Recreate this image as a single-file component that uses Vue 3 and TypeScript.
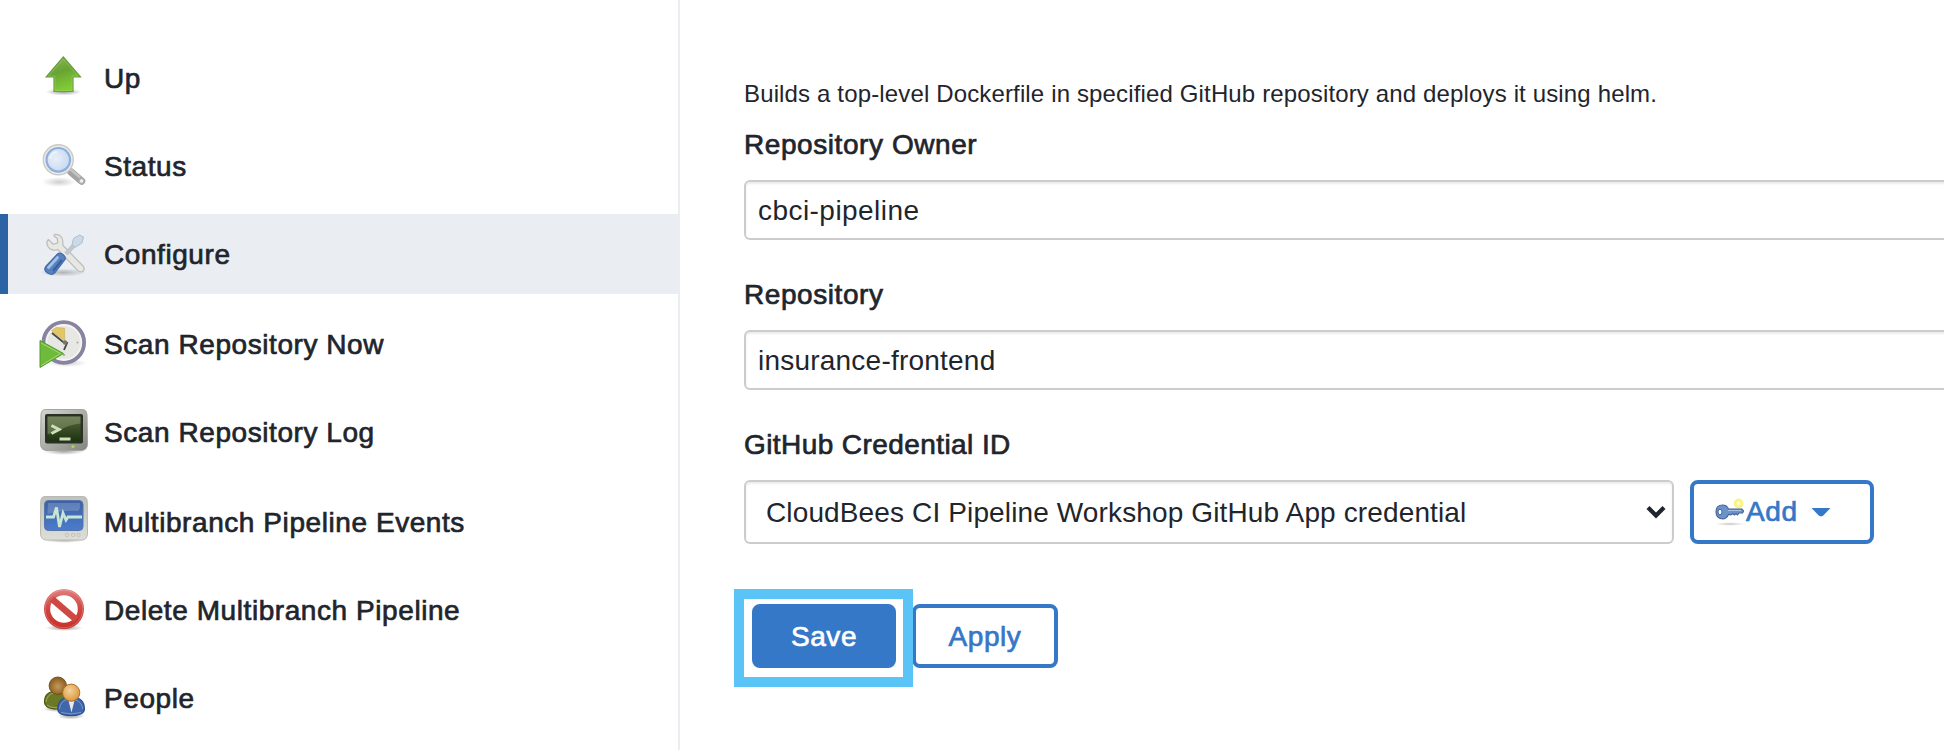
<script setup lang="ts">
import { ref } from 'vue'

type IconName = 'up' | 'search' | 'tools' | 'scan' | 'terminal' | 'monitor' | 'delete' | 'people'

interface Task {
  label: string
  icon: IconName
  selected?: boolean
}

const tasks: Task[] = [
  { label: 'Up', icon: 'up' },
  { label: 'Status', icon: 'search' },
  { label: 'Configure', icon: 'tools', selected: true },
  { label: 'Scan Repository Now', icon: 'scan' },
  { label: 'Scan Repository Log', icon: 'terminal' },
  { label: 'Multibranch Pipeline Events', icon: 'monitor' },
  { label: 'Delete Multibranch Pipeline', icon: 'delete' },
  { label: 'People', icon: 'people' },
]

const owner = ref<string>('cbci-pipeline')
const repository = ref<string>('insurance-frontend')
const credentials: string[] = ['CloudBees CI Pipeline Workshop GitHub App credential']
const credential = ref<string>(credentials[0])
</script>

<template>
  <div class="page">
    <svg class="defs" width="0" height="0" aria-hidden="true">
      <defs>
        <radialGradient id="shadow">
          <stop offset="0" stop-color="#000" stop-opacity=".38" />
          <stop offset="1" stop-color="#000" stop-opacity="0" />
        </radialGradient>
        <linearGradient id="green" x1="0" y1="0" x2=".35" y2="1">
          <stop offset="0" stop-color="#8db965" />
          <stop offset=".5" stop-color="#69a332" />
          <stop offset="1" stop-color="#80cc37" />
        </linearGradient>
        <radialGradient id="lens" cx=".4" cy=".45" r=".7">
          <stop offset="0" stop-color="#e9f0f9" />
          <stop offset="1" stop-color="#c1d5ee" />
        </radialGradient>
        <linearGradient id="bezel" x1="0" y1="0" x2="1" y2="1">
          <stop offset="0" stop-color="#d6d7d2" />
          <stop offset="1" stop-color="#82847d" />
        </linearGradient>
        <linearGradient id="bezelLight" x1="0" y1="0" x2="0" y2="1">
          <stop offset="0" stop-color="#bfc1bb" />
          <stop offset="1" stop-color="#deded9" />
        </linearGradient>
        <linearGradient id="screen" x1="0" y1="0" x2="0" y2="1">
          <stop offset="0" stop-color="#57683b" />
          <stop offset="1" stop-color="#1c3210" />
        </linearGradient>
        <linearGradient id="blue" x1="0" y1="0" x2="0" y2="1">
          <stop offset="0" stop-color="#3d62a3" />
          <stop offset="1" stop-color="#4b7bcc" />
        </linearGradient>
        <linearGradient id="red" x1="0" y1="0" x2="0" y2="1">
          <stop offset="0" stop-color="#e07f7d" />
          <stop offset=".5" stop-color="#cf4541" />
          <stop offset="1" stop-color="#c8312b" />
        </linearGradient>
        <radialGradient id="brown" cx=".5" cy=".55" r=".6">
          <stop offset="0" stop-color="#c59a58" />
          <stop offset="1" stop-color="#805619" />
        </radialGradient>
        <radialGradient id="orange" cx=".42" cy=".38" r=".65">
          <stop offset="0" stop-color="#f2d3a0" />
          <stop offset="1" stop-color="#dc9638" />
        </radialGradient>
      </defs>
    </svg>

    <aside class="sidebar">
      <a
        v-for="task in tasks"
        :key="task.label"
        class="task"
        :class="[`task-${task.icon}`, { selected: task.selected }]"
      >
        <svg class="icon" viewBox="0 0 48 48" aria-hidden="true">
          <template v-if="task.icon === 'up'">
            <ellipse cx="23.5" cy="38" rx="18" ry="3.5" fill="url(#shadow)" />
            <path d="M23.3 3 40.5 23H33v14.500H14V23H6.200Z" fill="url(#green)" stroke="#699d3d" stroke-width="1.2" />
            <path d="M23.300 5 38 22H32v14.500H15V22H8.500Z" fill="none" stroke="#a5da70" stroke-opacity=".4" />
          </template>

          <template v-else-if="task.icon === 'search'">
            <ellipse cx="19" cy="40" rx="17" ry="5" fill="url(#shadow)" opacity=".5" />
            <path d="m31 30 10.500 9" stroke="#a3a3a2" stroke-width="7.500" stroke-linecap="round" />
            <path d="m30 27 10 8.500" stroke="#c4c4c3" stroke-width="2.400" />
            <circle cx="41.500" cy="39" r="2.200" fill="#efefee" stroke="#b8b8b6" />
            <circle cx="18.300" cy="17.800" r="15" fill="#ebebea" stroke="#c9c9c8" stroke-width="1.400" />
            <circle cx="18.300" cy="17.800" r="11.800" fill="url(#lens)" stroke="#8dafdc" stroke-width="2.200" />
            <path d="M10 17a8 8 0 0 1 7-7" fill="none" stroke="#fff" stroke-width="2.500" opacity=".5" />
          </template>

          <template v-else-if="task.icon === 'tools'">
            <ellipse cx="23" cy="42.500" rx="23" ry="4" fill="url(#shadow)" opacity=".65" />
            <path d="M14.500 4.500c5-.8 9 3 8.200 8.200l.3 2.800 20 20.500c2 2.200 1 5-.7 5.600-1.800.7-3.500.2-5-1.500L17.800 19.500c-5.500 2-11-1-11-7.500l1.500-2.500 5 4.800 4.500-1.500-.5-4.300-3.300-2.500Z" fill="#e7e7e4" stroke="#bdbebb" stroke-width="1.300" />
            <path d="m26 24 10-11" stroke="#bfc7d0" stroke-width="4.500" />
            <path d="m32 14.500 1.500-6 6-3.500 4 2-1.500 5.800-6.500 4.500Z" fill="#cbd9e8" stroke="#aebccb" />
            <path d="M18 23.500c3-1.500 8.500 2.500 7 6L15 42.500c-2 2.300-5 2-7.500.5-3-2-3.500-4-1.700-6.500Z" fill="#5680bf" stroke="#4269a8" stroke-width="1.200" />
            <path d="m17.500 27.500-9 10" stroke="#a5c0e6" stroke-width="2.800" stroke-linecap="round" />
            <path d="m22 30-9 11" stroke="#355f9f" stroke-width="2" />
          </template>

          <template v-else-if="task.icon === 'scan'">
            <ellipse cx="27" cy="43" rx="20" ry="4" fill="url(#shadow)" opacity=".5" />
            <circle cx="23.800" cy="22.500" r="20" fill="#e7e7e3" stroke="#88849f" stroke-width="4.500" />
            <circle cx="23.800" cy="22.500" r="17.500" fill="none" stroke="#f5f5f4" stroke-width="1.800" />
            <path d="M11.500 10.500 16 7.500l8.500.8.200 12.500Z" fill="#e4c765" stroke="#c7a951" stroke-width=".6" />
            <path d="m12 13 11 9 4 1-3 7" fill="none" stroke="#494a43" stroke-width="1.900" />
            <circle cx="25" cy="22.500" r="2.200" fill="#77776e" />
            <circle cx="37.500" cy="22.500" r="1" fill="#aaa" />
            <circle cx="24" cy="35" r="1" fill="#999" />
            <path d="M0 20.500 23.500 33.500 0 47.500Z" fill="#6fb93b" stroke="#559b2b" stroke-width="1" />
            <path d="M1.200 23 20.500 33.500 1.200 45.500" fill="none" stroke="#a1dc73" stroke-width="1" />
          </template>

          <template v-else-if="task.icon === 'terminal'">
            <ellipse cx="24" cy="43" rx="21" ry="4" fill="url(#shadow)" />
            <path d="M5.500 1.500h37q4 0 4.500 5l.5 29q0 7-6.500 7H7q-6.500 0-6.500-7l.5-29q.5-5 4.500-5Z" fill="url(#bezel)" stroke="#a3a59d" />
            <rect x="5" y="6" width="38" height="29.500" rx="2" fill="#2b3026" />
            <rect x="7.500" y="8.500" width="33" height="25" fill="url(#screen)" />
            <path d="M7.500 8.500h33v7Q28 17 21 21.500T7.500 26Z" fill="#9fae86" opacity=".4" />
            <path d="m11.500 17.500 7.500 4-7.500 4M19.500 31h11" fill="none" stroke="#cddfbd" stroke-width="3" />
            <circle cx="33" cy="38.500" r="1.500" fill="#9edb48" />
          </template>

          <template v-else-if="task.icon === 'monitor'">
            <ellipse cx="24" cy="43.500" rx="21" ry="3.500" fill="url(#shadow)" />
            <path d="M5 .5h38q4 0 4.300 5l.2 31.500q0 7-6 7h-35q-6 0-6-7l.2-31.500Q1 .5 5 .5Z" fill="url(#bezelLight)" stroke="#b9bab4" />
            <rect x="4.500" y="4.500" width="38.500" height="30" rx="4" fill="url(#blue)" stroke="#5775aa" />
            <path d="M8 7h32q1 5-2 8Q25 14 7.500 18Z" fill="#fff" opacity=".18" />
            <path d="M6 21h7.500l3-9.500L19.500 31l3.500-14 3 7 2-3h14" fill="none" stroke="#c8e5d4" stroke-width="2.800" />
            <g fill="none" stroke="#c3c4be" stroke-width="1">
              <circle cx="27" cy="39" r="1.700" /><circle cx="33" cy="39" r="1.700" /><circle cx="38.500" cy="39" r="1.700" />
            </g>
          </template>

          <template v-else-if="task.icon === 'delete'">
            <ellipse cx="24" cy="42" rx="19" ry="3" fill="url(#shadow)" />
            <circle cx="24" cy="23" r="16.700" fill="#fff" />
            <path fill-rule="evenodd" d="M24 3a20 20 0 1 1 0 40 20 20 0 0 1 0-40Zm0 6.200a13.800 13.800 0 1 0 0 27.600 13.800 13.800 0 0 0 0-27.600Z" fill="url(#red)" />
            <path d="m12 13 24 20.500" stroke="#ce4844" stroke-width="6.500" />
            <circle cx="24" cy="23" r="18.800" fill="none" stroke="#fff" stroke-opacity=".22" />
          </template>

          <template v-else>
            <ellipse cx="16" cy="35" rx="13" ry="3" fill="url(#shadow)" />
            <ellipse cx="31" cy="42" rx="14" ry="3.500" fill="url(#shadow)" />
            <path d="M4.500 28q0-11 12.500-11t13 11q-1 7-13 7T4.500 28Z" fill="#6b7824" stroke="#4a5912" stroke-width="1.200" />
            <path d="M6 28q1-8 9-9.500M7 31q3 3 10 2.800" fill="none" stroke="#a4ad5d" stroke-width="1" />
            <circle cx="17.800" cy="11.700" r="8.700" fill="url(#brown)" stroke="#6d4a17" stroke-width=".9" />
            <path d="M17.800 35q0-12 13.300-12t13.300 12q0 6.500-13.300 6.500T17.800 35Z" fill="#4066ab" stroke="#2e508e" stroke-width="1.200" />
            <path d="M19.500 35q1-8 7.500-9.500M42.700 35q-1-7-7-9M21 38.500q10 3 20 0" fill="none" stroke="#819ed0" stroke-width=".9" />
            <path d="M28.500 26.500h6l-3 12Z" fill="#e9ebee" />
            <circle cx="31.200" cy="18.700" r="8.600" fill="url(#orange)" stroke="#a76920" stroke-width=".9" />
          </template>
        </svg>
        <span class="task-label">{{ task.label }}</span>
      </a>
    </aside>

    <main class="main">
      <p class="description">
        Builds a top-level Dockerfile in specified GitHub repository and deploys it using helm.
      </p>

      <div class="field">
        <label class="label" for="owner">Repository Owner</label>
        <input id="owner" v-model="owner" class="control owner" type="text" spellcheck="false" />
      </div>

      <div class="field">
        <label class="label" for="repository">Repository</label>
        <input id="repository" v-model="repository" class="control" type="text" spellcheck="false" />
      </div>

      <div class="field">
        <label class="label credential-label" for="credential">GitHub Credential ID</label>
        <div class="credential-row">
          <div class="select-wrap">
            <select id="credential" v-model="credential" class="control select">
              <option v-for="item in credentials" :key="item" :value="item">{{ item }}</option>
            </select>
            <svg class="chevron" viewBox="0 0 20 14" aria-hidden="true">
              <path d="m2 2.500 8 8 8-8" fill="none" stroke="#1f252c" stroke-width="4.200" />
            </svg>
          </div>
          <button class="button add" type="button">
            <svg class="key" viewBox="0 0 32 32" aria-hidden="true">
              <ellipse cx="16" cy="28" rx="15" ry="1.800" fill="url(#shadow)" opacity=".6" />
              <circle cx="24.500" cy="7.500" r="3.400" fill="#fffde0" stroke="#fdf480" stroke-width="3" />
              <path d="M2 16q0-7 6.500-7 4.500 0 6 4H28l1.600 2-1 2H25l-1.500 2-1.500-1.500-1.500 1.500-1.500-1.500-2 1.500-2.500-.5q-2 4.500-6 4.500-6.500-.5-6.500-7Z" fill="#6b92c9" stroke="#41649b" stroke-width="1.100" />
              <ellipse cx="6" cy="16" rx="2" ry="2.800" fill="#fff" stroke="#41649b" />
              <path d="M14 14.500h13" stroke="#a8c3e8" stroke-width="1" />
            </svg>
            <span>Add</span>
            <svg class="caret" viewBox="0 0 20 9" aria-hidden="true">
              <path d="M.5 0h19L12 7.700q-2 1.300-4 0Z" fill="#3578c7" />
            </svg>
          </button>
        </div>
      </div>

      <div class="actions">
        <div class="highlight">
          <button class="button primary" type="button">Save</button>
        </div>
        <button class="button apply" type="button">Apply</button>
      </div>
    </main>
  </div>
</template>

<style>
body {
  margin: 0;
  background: #fff;
}
</style>

<style scoped>
.page {
  display: flex;
  box-sizing: border-box;
  width: 100%;
  height: 750px;
  overflow: hidden;
  background: #fff;
  color: #1f252c;
  font-family: "Liberation Sans", Arial, sans-serif;
  font-size: 28px;
}

.defs {
  position: absolute;
}

.sidebar {
  display: flex;
  flex: none;
  flex-direction: column;
  gap: 8px;
  box-sizing: border-box;
  width: 680px;
  padding-top: 38px;
  border-right: 2px solid #eaeef2;
}

.task {
  display: flex;
  flex: none;
  align-items: center;
  gap: 16px;
  box-sizing: border-box;
  height: 80px;
  padding-left: 40px;
}

.task-scan,
.task-monitor {
  margin-top: 2px;
}

.task-monitor .icon {
  margin-top: -4px;
}

.task.selected {
  padding-left: 32px;
  border-left: 8px solid #2b63a4;
  background: #eaeef2;
}

.icon {
  flex: none;
  width: 48px;
  height: 48px;
  overflow: visible;
  filter: blur(0.4px);
}

.task-label,
.label,
.button {
  letter-spacing: 0.57px;
  -webkit-text-stroke: 0.7px currentColor;
}

.task-label {
  padding-top: 2px;
  white-space: nowrap;
}

.main {
  flex: 1;
  min-width: 0;
  padding: 78px 0 0 64px;
}

.description {
  margin: 0;
  height: 52px;
  font-size: 24px;
  line-height: 32px;
  letter-spacing: 0.145px;
  white-space: nowrap;
}

.field {
  margin-bottom: 40px;
}

.label {
  display: block;
  box-sizing: border-box;
  height: 50px;
  padding-top: 1px;
  line-height: 28px;
}

.credential-label {
  letter-spacing: 0.42px;
}

.control {
  display: block;
  box-sizing: border-box;
  width: 1240px;
  height: 60px;
  margin: 0;
  padding: 2px 12px 0;
  border: 2px solid #ccc;
  border-radius: 6px;
  outline: none;
  background: #fff;
  box-shadow: inset 0 2px 2px rgba(0, 0, 0, 0.075);
  color: inherit;
  font: inherit;
  letter-spacing: 0.22px;
}

.owner {
  letter-spacing: 0.45px;
}

.credential-row {
  display: flex;
  gap: 16px;
}

.select-wrap {
  position: relative;
  width: 930px;
}

.select {
  width: 100%;
  height: 64px;
  padding: 0 20px;
  letter-spacing: 0.13px;
  appearance: none;
}

.chevron {
  position: absolute;
  top: 25px;
  right: 8px;
  width: 20px;
  height: 14px;
}

.button {
  flex: none;
  box-sizing: border-box;
  height: 64px;
  margin: 0;
  padding: 1px 0 0;
  border: 4px solid #3578c7;
  border-radius: 8px;
  background: #fff;
  color: #3578c7;
  font-family: inherit;
  font-size: 28px;
}

.add {
  display: flex;
  align-items: center;
  width: 184px;
  padding: 0 0 0 20px;
}

.key {
  width: 32px;
  height: 32px;
  filter: blur(0.3px);
}

.caret {
  width: 20px;
  height: 9px;
  margin-left: 13px;
}

.actions {
  display: flex;
  align-items: flex-start;
  margin: 45px 0 0 -10px;
}

.highlight {
  z-index: 1;
  box-sizing: border-box;
  width: 179px;
  height: 98px;
  padding: 5px 8px;
  border: 10px solid #5ac4f6;
}

.primary {
  display: block;
  width: 144px;
  background: #3578c7;
  color: #fff;
}

.apply {
  width: 146px;
  margin: 15px 0 0 -1px;
}
</style>
